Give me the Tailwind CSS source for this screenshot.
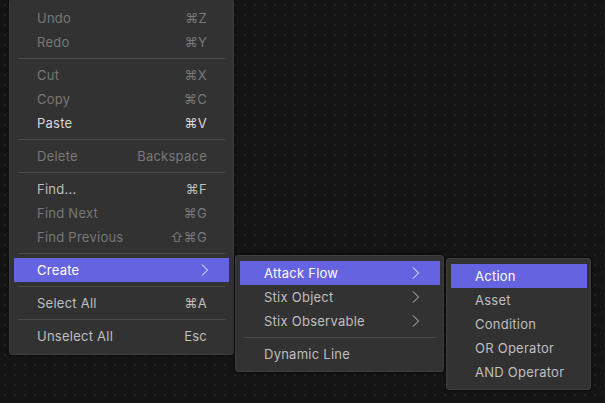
<!DOCTYPE html>
<html lang="en">
<head>
  <meta charset="UTF-8" />
  <title>Context Menu</title>
  <script src="https://cdn.jsdelivr.net/npm/@tailwindcss/browser@4"></script>
</head>
<body class="relative w-[605px] h-[403px] overflow-hidden bg-[#141414] bg-[radial-gradient(#222222_1px,transparent_1px)] bg-[size:10px_10px] font-['Inter','DejaVu_Sans',sans-serif] text-[13px] text-[#bfbfbf] tracking-[0.25px]">

  <!-- main menu -->
  <div class="absolute left-[9px] top-[-1px] w-[225px] rounded-[3px] border border-[#3e3e3e] bg-[#323232] px-[4px] py-[6px] shadow-[0_0_3px_#000]">
    <div class="flex h-6 items-center justify-between pt-[2px] pl-[23px] pr-[22px] text-[#787878]"><span>Undo</span><span>⌘Z</span></div>
    <div class="flex h-6 items-center justify-between pt-[2px] pl-[23px] pr-[22px] text-[#787878]"><span>Redo</span><span>⌘Y</span></div>
    <div class="mx-1 my-1 h-px bg-[#4a4a4a]"></div>
    <div class="flex h-6 items-center justify-between pt-[2px] pl-[23px] pr-[22px] text-[#787878]"><span>Cut</span><span>⌘X</span></div>
    <div class="flex h-6 items-center justify-between pt-[2px] pl-[23px] pr-[22px] text-[#787878]"><span>Copy</span><span>⌘C</span></div>
    <div class="flex h-6 items-center justify-between pt-[2px] pl-[23px] pr-[22px] text-[#d9d9d9]"><span>Paste</span><span>⌘V</span></div>
    <div class="mx-1 my-1 h-px bg-[#4a4a4a]"></div>
    <div class="flex h-6 items-center justify-between pt-[2px] pl-[23px] pr-[22px] text-[#787878]"><span>Delete</span><span>Backspace</span></div>
    <div class="mx-1 my-1 h-px bg-[#4a4a4a]"></div>
    <div class="flex h-6 items-center justify-between pt-[2px] pl-[23px] pr-[22px] text-[#bfbfbf]"><span>Find...</span><span>⌘F</span></div>
    <div class="flex h-6 items-center justify-between pt-[2px] pl-[23px] pr-[22px] text-[#787878]"><span>Find Next</span><span>⌘G</span></div>
    <div class="flex h-6 items-center justify-between pt-[2px] pl-[23px] pr-[22px] text-[#787878]"><span>Find Previous</span><span>⇧⌘G</span></div>
    <div class="mx-1 my-1 h-px bg-[#4a4a4a]"></div>
    <div class="flex h-6 items-center justify-between pt-[2px] pl-[23px] pr-[20px] bg-[#6563df] text-white"><span>Create</span>
      <svg class="-mt-[2px] w-[9px] h-[12px]" viewBox="0 0 9 12" fill="none" stroke="currentColor" stroke-width="1"><path d="M2 .5l5.5 5.5-5.5 5.5" /></svg>
    </div>
    <div class="mx-1 my-1 h-px bg-[#4a4a4a]"></div>
    <div class="flex h-6 items-center justify-between pt-[2px] pl-[23px] pr-[22px]"><span>Select All</span><span>⌘A</span></div>
    <div class="mx-1 my-1 h-px bg-[#4a4a4a]"></div>
    <div class="flex h-6 items-center justify-between pt-[2px] pl-[23px] pr-[22px]"><span>Unselect All</span><span>Esc</span></div>
  </div>

  <!-- create submenu -->
  <div class="absolute left-[235px] top-[255px] w-[209px] rounded-[3px] border border-[#3e3e3e] bg-[#323232] pl-[4px] pr-[3px] py-[5px] shadow-[0_0_3px_#000]">
    <div class="flex h-6 items-center justify-between pt-[2px] pl-[24px] pr-[20px] bg-[#6563df] text-white"><span>Attack Flow</span>
      <svg class="-mt-[2px] w-[9px] h-[12px]" viewBox="0 0 9 12" fill="none" stroke="currentColor" stroke-width="1"><path d="M2 .5l5.5 5.5-5.5 5.5" /></svg>
    </div>
    <div class="flex h-6 items-center justify-between pt-[2px] pl-[24px] pr-[20px]"><span>Stix Object</span>
      <svg class="-mt-[2px] w-[9px] h-[12px]" viewBox="0 0 9 12" fill="none" stroke="currentColor" stroke-width="1"><path d="M2 .5l5.5 5.5-5.5 5.5" /></svg>
    </div>
    <div class="flex h-6 items-center justify-between pt-[2px] pl-[24px] pr-[20px]"><span>Stix Observable</span>
      <svg class="-mt-[2px] w-[9px] h-[12px]" viewBox="0 0 9 12" fill="none" stroke="currentColor" stroke-width="1"><path d="M2 .5l5.5 5.5-5.5 5.5" /></svg>
    </div>
    <div class="mx-1 my-1 h-px bg-[#4a4a4a]"></div>
    <div class="flex h-6 items-center pt-[2px] pl-[24px]"><span>Dynamic Line</span></div>
  </div>

  <!-- attack flow submenu -->
  <div class="absolute left-[446px] top-[258px] w-[145px] rounded-[3px] border border-[#3e3e3e] bg-[#323232] pl-[4px] pr-[3px] py-[5px] shadow-[0_0_3px_#000]">
    <div class="flex h-6 items-center pt-[2px] pl-[24px] bg-[#6563df] text-white">Action</div>
    <div class="flex h-6 items-center pt-[2px] pl-[24px]">Asset</div>
    <div class="flex h-6 items-center pt-[2px] pl-[24px]">Condition</div>
    <div class="flex h-6 items-center pt-[2px] pl-[24px]">OR Operator</div>
    <div class="flex h-6 items-center pt-[2px] pl-[24px]">AND Operator</div>
  </div>
</body>
</html>
